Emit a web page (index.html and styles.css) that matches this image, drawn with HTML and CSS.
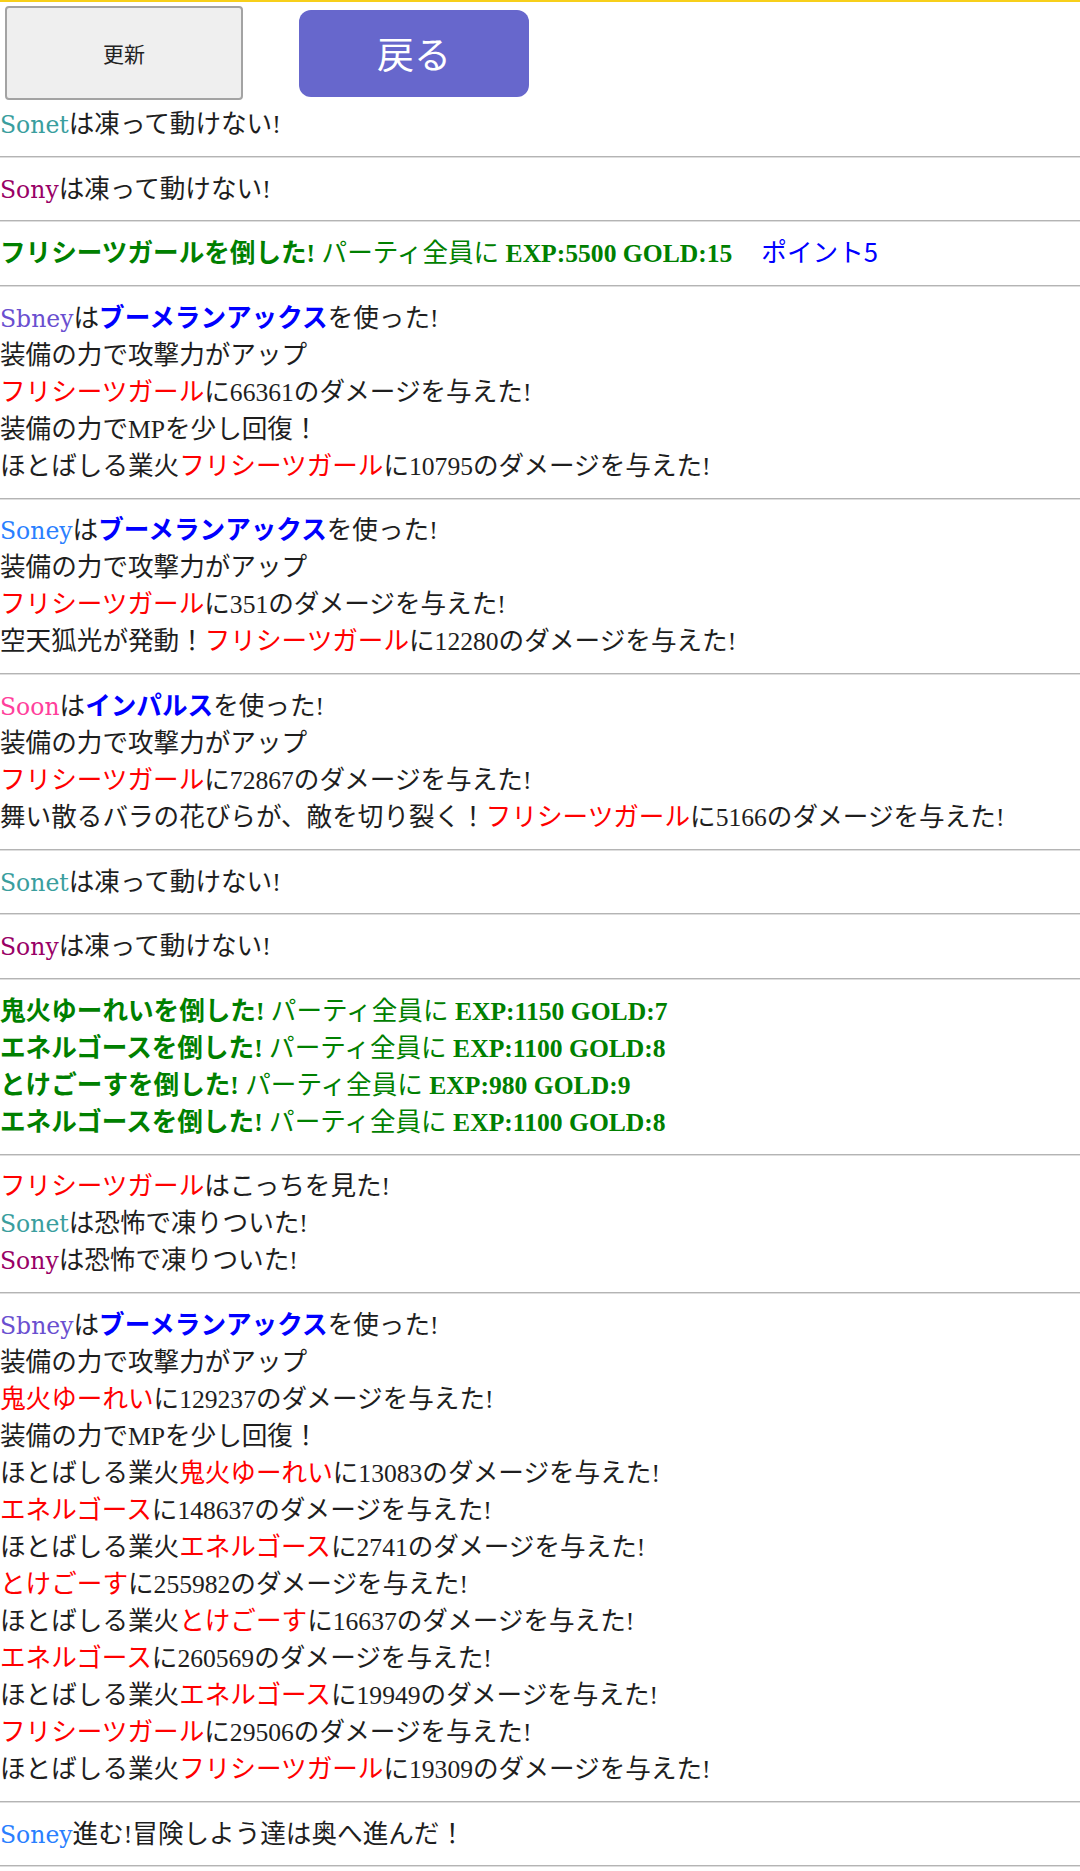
FILE: index.html
```html
<!DOCTYPE html>
<html lang="ja">
<head>
  <meta charset="UTF-8" />
  <meta name="viewport" content="width=device-width, initial-scale=1.0"/>
  <title>バトルログ</title>
  <link rel="stylesheet" href="styles.css">
</head>
<body>
  <div class="toolbar">
    <button class="reload" onclick="location.reload()">更新</button>
    <a class="back" href="#">戻る</a>
  </div>

  <div class="log">
    <div><span class="name sonet">Sonet</span>は凍って動けない!</div>
    <hr>
    <div><span class="name sony">Sony</span>は凍って動けない!</div>
    <hr>
    <div class="win"><b>フリシーツガールを倒した!</b> パーティ全員に <b>EXP:5500 GOLD:15</b><span class="point">ポイント5</span></div>
    <hr>
    <div><span class="name sbney">Sbney</span>は<b class="skill">ブーメランアックス</b>を使った!</div>
    <div>装備の力で攻撃力がアップ</div>
    <div><span class="enemy">フリシーツガール</span>に66361のダメージを与えた!</div>
    <div>装備の力でMPを少し回復！</div>
    <div>ほとばしる業火<span class="enemy">フリシーツガール</span>に10795のダメージを与えた!</div>
    <hr>
    <div><span class="name soney">Soney</span>は<b class="skill">ブーメランアックス</b>を使った!</div>
    <div>装備の力で攻撃力がアップ</div>
    <div><span class="enemy">フリシーツガール</span>に351のダメージを与えた!</div>
    <div>空天狐光が発動！<span class="enemy">フリシーツガール</span>に12280のダメージを与えた!</div>
    <hr>
    <div><span class="name soon">Soon</span>は<b class="skill">インパルス</b>を使った!</div>
    <div>装備の力で攻撃力がアップ</div>
    <div><span class="enemy">フリシーツガール</span>に72867のダメージを与えた!</div>
    <div>舞い散るバラの花びらが、敵を切り裂く！<span class="enemy">フリシーツガール</span>に5166のダメージを与えた!</div>
    <hr>
    <div><span class="name sonet">Sonet</span>は凍って動けない!</div>
    <hr>
    <div><span class="name sony">Sony</span>は凍って動けない!</div>
    <hr>
    <div class="win"><b>鬼火ゆーれいを倒した!</b> パーティ全員に <b>EXP:1150 GOLD:7</b></div>
    <div class="win"><b>エネルゴースを倒した!</b> パーティ全員に <b>EXP:1100 GOLD:8</b></div>
    <div class="win"><b>とけごーすを倒した!</b> パーティ全員に <b>EXP:980 GOLD:9</b></div>
    <div class="win"><b>エネルゴースを倒した!</b> パーティ全員に <b>EXP:1100 GOLD:8</b></div>
    <hr>
    <div><span class="enemy">フリシーツガール</span>はこっちを見た!</div>
    <div><span class="name sonet">Sonet</span>は恐怖で凍りついた!</div>
    <div><span class="name sony">Sony</span>は恐怖で凍りついた!</div>
    <hr>
    <div><span class="name sbney">Sbney</span>は<b class="skill">ブーメランアックス</b>を使った!</div>
    <div>装備の力で攻撃力がアップ</div>
    <div><span class="enemy">鬼火ゆーれい</span>に129237のダメージを与えた!</div>
    <div>装備の力でMPを少し回復！</div>
    <div>ほとばしる業火<span class="enemy">鬼火ゆーれい</span>に13083のダメージを与えた!</div>
    <div><span class="enemy">エネルゴース</span>に148637のダメージを与えた!</div>
    <div>ほとばしる業火<span class="enemy">エネルゴース</span>に2741のダメージを与えた!</div>
    <div><span class="enemy">とけごーす</span>に255982のダメージを与えた!</div>
    <div>ほとばしる業火<span class="enemy">とけごーす</span>に16637のダメージを与えた!</div>
    <div><span class="enemy">エネルゴース</span>に260569のダメージを与えた!</div>
    <div>ほとばしる業火<span class="enemy">エネルゴース</span>に19949のダメージを与えた!</div>
    <div><span class="enemy">フリシーツガール</span>に29506のダメージを与えた!</div>
    <div>ほとばしる業火<span class="enemy">フリシーツガール</span>に19309のダメージを与えた!</div>
    <hr>
    <div><span class="name soney">Soney</span>進む!冒険しよう達は奥へ進んだ！</div>
    <hr>
  </div>
</body>
</html>
```

FILE: styles.css
```css
body {
  margin: 0;
  border-top: 2px solid #f7cf1a;
  font-family: "Liberation Serif", "Noto Sans CJK JP", serif;
  font-size: 25.6px;
  line-height: 37px;
  color: #1e1e1e;
  background: #fff;
}
.toolbar {
  display: flex;
  align-items: flex-start;
  padding: 4px 0 0 5px;
}
.reload {
  width: 238px;
  height: 94px;
  background: #efefef;
  border: 2px solid #a3a3a3;
  border-radius: 4px;
  font-family: "Noto Sans CJK JP", sans-serif;
  font-size: 21px;
  color: #222;
}
.back {
  display: flex;
  align-items: center;
  justify-content: center;
  width: 230px;
  height: 87px;
  margin: 4px 0 0 56px;
  background: #6767cc;
  border-radius: 12px;
  color: #fff;
  text-decoration: none;
  font-family: "Noto Sans CJK JP", sans-serif;
  font-size: 37px;
}
.log {
  margin-top: 6px;
}
hr {
  margin: 12.8px 0;
  border: 0;
  border-top: 1px solid #b4b4b4;
  border-bottom: 1px solid #dedede;
}
/* spans in another font get line-height 0 so every row stays 37px */
.name {
  font-family: "DejaVu Serif", serif;
  font-size: 23.5px;
  line-height: 0;
}
.sonet { color: #3a9e9e; }
.sony { color: #990066; }
.sbney { color: #6a4fd0; }
.soney { color: #2a7fff; }
.soon { color: #ff3f9c; }
.enemy { color: #ff0000; }
.skill { color: #0000ff; }
.win { color: #008000; }
.point {
  margin-left: 29px;
  color: #0000ff;
  font-family: "Noto Sans CJK JP", sans-serif;
  line-height: 0;
}
```
